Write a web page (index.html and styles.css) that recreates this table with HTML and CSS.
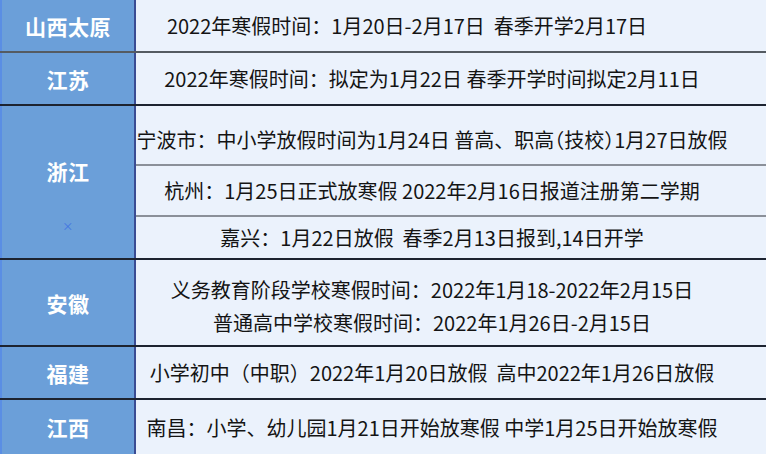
FILE: index.html
```html
<!DOCTYPE html>
<html lang="zh-CN">
<head>
<meta charset="utf-8">
<title>寒假时间</title>
<link rel="stylesheet" href="styles.css">
</head>
<body>
<div class="table">
  <div class="row r1">
    <div class="label">山西太原</div>
    <div class="content">
      <div class="cell shift">2022年寒假时间：1月20日-2月17日&nbsp;&nbsp;春季开学2月17日</div>
    </div>
  </div>
  <div class="row r2">
    <div class="label">江苏</div>
    <div class="content">
      <div class="cell">2022年寒假时间：拟定为1月22日 春季开学时间拟定2月11日</div>
    </div>
  </div>
  <div class="row r3">
    <div class="label label-top">浙江<span class="mark">×</span></div>
    <div class="content">
      <div class="cell sub s1"><span>宁波市：中小学放假时间为1月24日 普高、职高<span class="halt">（技校）</span>1月27日放假</span></div>
      <div class="cell sub s2">杭州：1月25日正式放寒假 2022年2月16日报道注册第二学期</div>
      <div class="cell s3">嘉兴：1月22日放假&nbsp;&nbsp;春季2月13日报到,14日开学</div>
    </div>
  </div>
  <div class="row r4">
    <div class="label">安徽</div>
    <div class="content">
      <div class="cell multi">
        <div>义务教育阶段学校寒假时间：2022年1月18-2022年2月15日</div>
        <div>普通高中学校寒假时间：2022年1月26日-2月15日</div>
      </div>
    </div>
  </div>
  <div class="row r5">
    <div class="label">福建</div>
    <div class="content">
      <div class="cell">小学初中（中职）2022年1月20日放假&nbsp;&nbsp;高中2022年1月26日放假</div>
    </div>
  </div>
  <div class="row r6">
    <div class="label">江西</div>
    <div class="content">
      <div class="cell">南昌：小学、幼儿园1月21日开始放寒假 中学1月25日开始放寒假</div>
    </div>
  </div>
</div>
</body>
</html>
```

FILE: styles.css
```css
* { box-sizing: border-box; }
html, body {
  margin: 0;
  padding: 0;
  width: 766px;
  height: 454px;
  overflow: hidden;
  background: #ebf2fc;
}
.table {
  display: flex;
  flex-direction: column;
  width: 766px;
  font-family: "Noto Sans CJK SC", "Noto Sans", sans-serif;
}
.row {
  display: grid;
  grid-template-columns: 136px 1fr;
  border-bottom: 2px solid #1d2330;
}
.r1 { height: 53px; border-bottom-color: #555b62; }
.r2 { height: 53px; }
.r3 { height: 154px; }
.r4 { height: 87px; }
.r5 { height: 53px; }
.r6 { height: 54px; border-bottom: none; }

.label {
  background: #6b9fd9;
  border-left: 2px solid #5a8ee4;
  border-right: 2px solid #3a4c93;
  color: #ffffff;
  font-weight: 700;
  font-size: 21px;
  letter-spacing: 0.5px;
  display: flex;
  align-items: center;
  justify-content: center;
}
.label-top {
  flex-direction: column;
  justify-content: flex-start;
  padding-top: 50px;
  line-height: 30px;
}
.mark {
  display: block;
  margin-top: 35px;
  font-size: 11px;
  line-height: 11px;
  font-weight: 400;
  color: #3f72e2;
}
.content {
  display: flex;
  flex-direction: column;
  background: #ebf2fc;
}
.cell {
  flex: 1;
  display: flex;
  flex-direction: column;
  align-items: center;
  justify-content: center;
  padding-right: 38px;
  font-size: 20px;
  color: #141414;
  white-space: nowrap;
}
.halt { font-feature-settings: "halt" 1; }
.shift { padding-right: 88px; }
.sub { border-bottom: 2px solid #8b9099; }
.s1 { flex: 0 0 60px; padding-top: 8px; }
.s2 { flex: 0 0 51px; }
.s3 { flex: 1; }
.multi { line-height: 33px; padding-top: 6px; }
```
